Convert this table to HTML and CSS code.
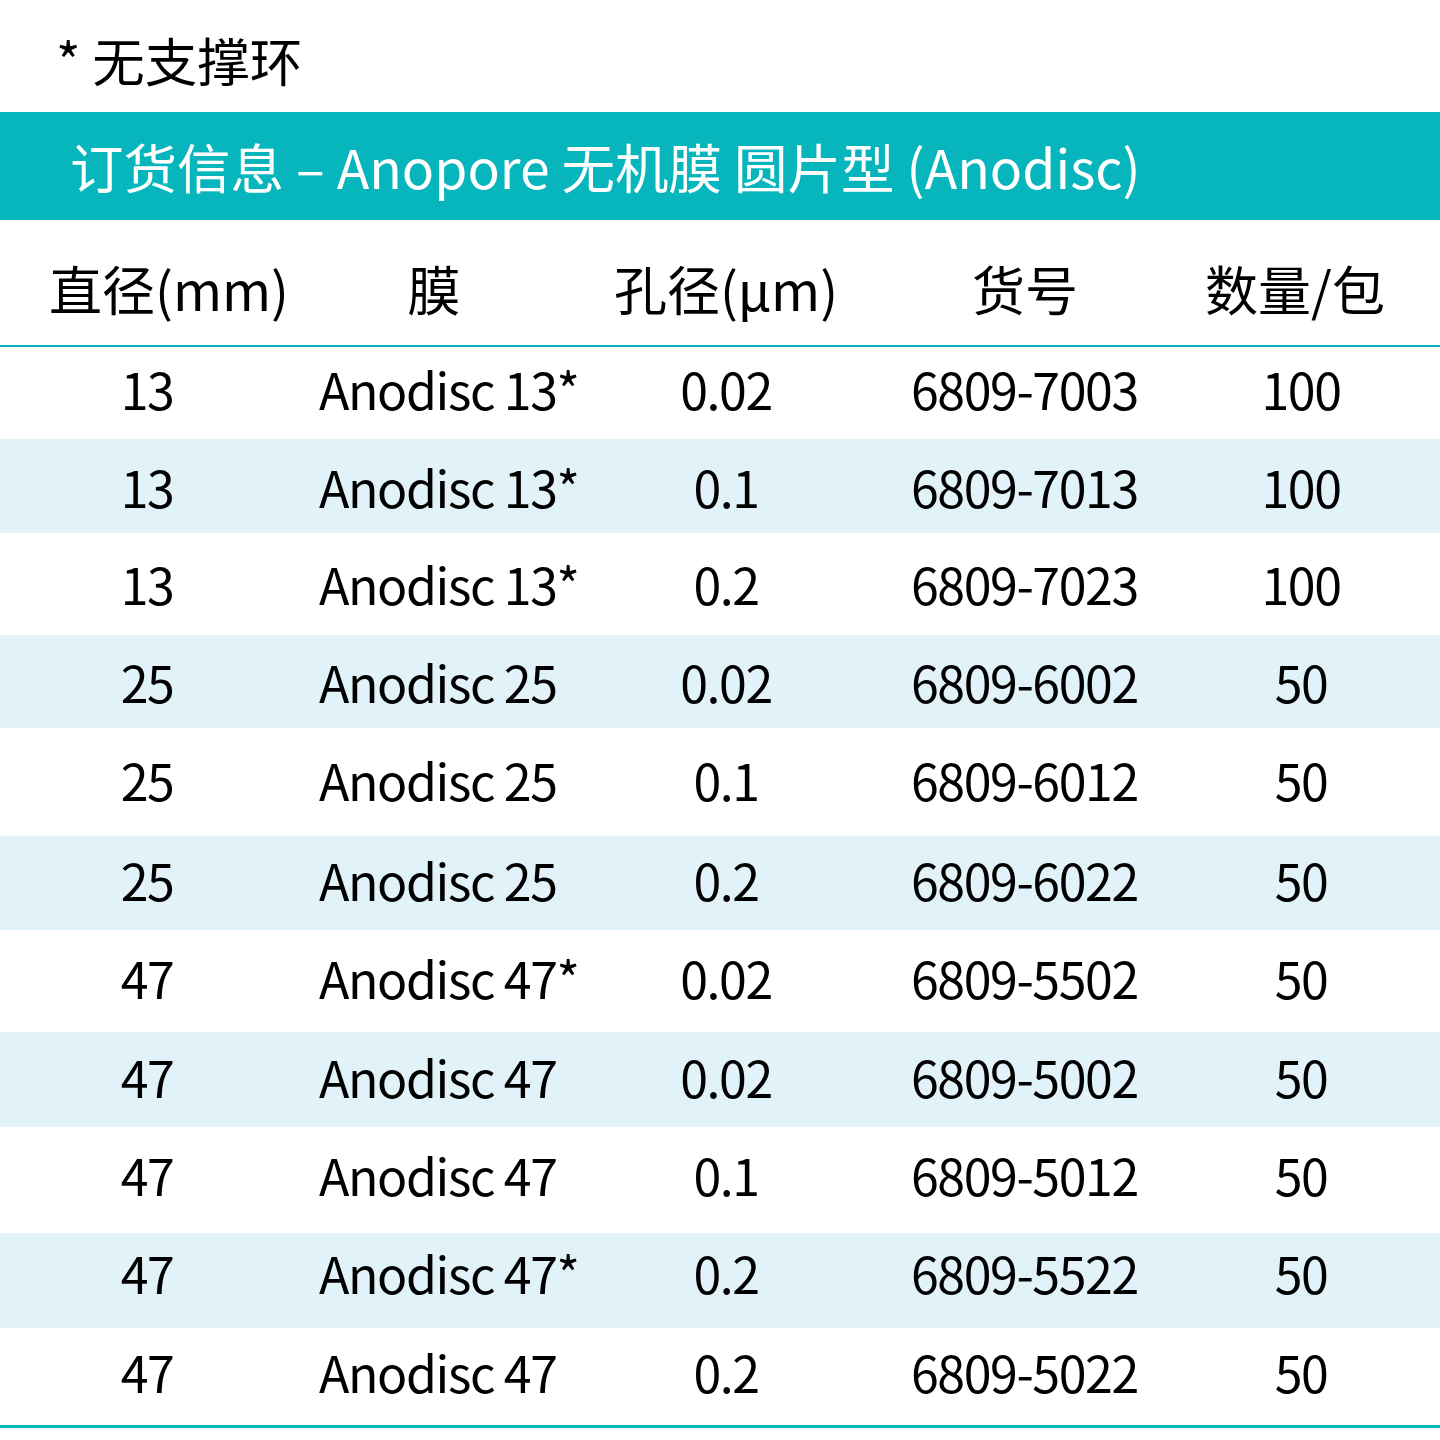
FILE: index.html
```html
<!DOCTYPE html>
<html lang="zh-CN">
<head>
<meta charset="utf-8">
<title>订货信息 – Anopore 无机膜 圆片型 (Anodisc)</title>
<link rel="stylesheet" href="styles.css">
</head>
<body>
<div class="page">
  <div class="note">* 无支撑环</div>
  <div class="banner">订货信息 – Anopore 无机膜 圆片型 (Anodisc)</div>
  <div class="table">
    <div class="row head">
      <div class="c c1">直径(mm)</div>
      <div class="c c2">膜</div>
      <div class="c c3">孔径(µm)</div>
      <div class="c c4">货号</div>
      <div class="c c5">数量/包</div>
    </div>
    <div class="row"><div class="c c1">13</div><div class="c c2">Anodisc 13*</div><div class="c c3">0.02</div><div class="c c4">6809-7003</div><div class="c c5">100</div></div>
    <div class="row alt"><div class="c c1">13</div><div class="c c2">Anodisc 13*</div><div class="c c3">0.1</div><div class="c c4">6809-7013</div><div class="c c5">100</div></div>
    <div class="row"><div class="c c1">13</div><div class="c c2">Anodisc 13*</div><div class="c c3">0.2</div><div class="c c4">6809-7023</div><div class="c c5">100</div></div>
    <div class="row alt"><div class="c c1">25</div><div class="c c2">Anodisc 25</div><div class="c c3">0.02</div><div class="c c4">6809-6002</div><div class="c c5">50</div></div>
    <div class="row"><div class="c c1">25</div><div class="c c2">Anodisc 25</div><div class="c c3">0.1</div><div class="c c4">6809-6012</div><div class="c c5">50</div></div>
    <div class="row alt"><div class="c c1">25</div><div class="c c2">Anodisc 25</div><div class="c c3">0.2</div><div class="c c4">6809-6022</div><div class="c c5">50</div></div>
    <div class="row"><div class="c c1">47</div><div class="c c2">Anodisc 47*</div><div class="c c3">0.02</div><div class="c c4">6809-5502</div><div class="c c5">50</div></div>
    <div class="row alt"><div class="c c1">47</div><div class="c c2">Anodisc 47</div><div class="c c3">0.02</div><div class="c c4">6809-5002</div><div class="c c5">50</div></div>
    <div class="row"><div class="c c1">47</div><div class="c c2">Anodisc 47</div><div class="c c3">0.1</div><div class="c c4">6809-5012</div><div class="c c5">50</div></div>
    <div class="row alt"><div class="c c1">47</div><div class="c c2">Anodisc 47*</div><div class="c c3">0.2</div><div class="c c4">6809-5522</div><div class="c c5">50</div></div>
    <div class="row last"><div class="c c1">47</div><div class="c c2">Anodisc 47</div><div class="c c3">0.2</div><div class="c c4">6809-5022</div><div class="c c5">50</div></div>
  </div>
</div>
</body>
</html>
```
FILE: styles.css
```css
html, body {
  margin: 0;
  padding: 0;
  background: #ffffff;
}
body {
  font-family: "Noto Sans CJK SC", "Noto Sans", sans-serif;
  color: #000000;
}
.page {
  width: 1440px;
}
.note {
  height: 112px;
  box-sizing: border-box;
  padding: 8px 0 0 56px;
  font-size: 52.5px;
  line-height: 102px;
}
.banner {
  height: 108px;
  box-sizing: border-box;
  background: #07b5bd;
  color: #ffffff;
  padding: 2px 0 0 70px;
  font-size: 53.5px;
  line-height: 104px;
  white-space: nowrap;
}
.table {
  display: flex;
  flex-direction: column;
}
.row {
  display: grid;
  grid-template-columns: 294px 306px 252px 310px 278px;
  height: 98px;
  box-sizing: border-box;
  padding-top: 20px;
  align-items: start;
  font-size: 50px;
  line-height: 50px;
  letter-spacing: -1.4px;
}
.row.alt {
  background: #e1f3f8;
}
/* row heights / offsets */
.row:nth-child(2)  { height: 92px;  padding-top: 16px; }
.row:nth-child(3)  { height: 94px;  padding-top: 22px; }
.row:nth-child(4)  { height: 102px; padding-top: 25px; }
.row:nth-child(5)  { height: 93px;  padding-top: 21px; }
.row:nth-child(6)  { height: 108px; padding-top: 26px; }
.row:nth-child(7)  { height: 94px;  padding-top: 18px; }
.row:nth-child(8)  { height: 102px; padding-top: 22px; }
.row:nth-child(9)  { height: 95px;  padding-top: 19px; }
.row:nth-child(10) { height: 106px; padding-top: 22px; }
.row:nth-child(11) { height: 95px;  padding-top: 14px; }
.row.last {
  height: 100px;
  padding-top: 18px;
  border-bottom: 3px solid #07b5bd;
}
.row.head {
  height: 127px;
  padding-top: 12px;
  align-items: center;
  line-height: 1;
  border-bottom: 2px solid #07b5bd;
  font-size: 53px;
  letter-spacing: 0;
}
.c {
  white-space: nowrap;
}
.c1, .c3, .c5 {
  text-align: center;
}
.c2 {
  padding-left: 25px;
}
.c4 {
  padding-left: 59px;
}
.head .c1 {
  padding-left: 44px;
}
.head .c2 {
  padding-left: 0;
  padding-right: 26px;
  text-align: center;
}
.head .c4 {
  padding-left: 36px;
  text-align: center;
}
.head .c5 {
  padding-right: 12px;
}
```
